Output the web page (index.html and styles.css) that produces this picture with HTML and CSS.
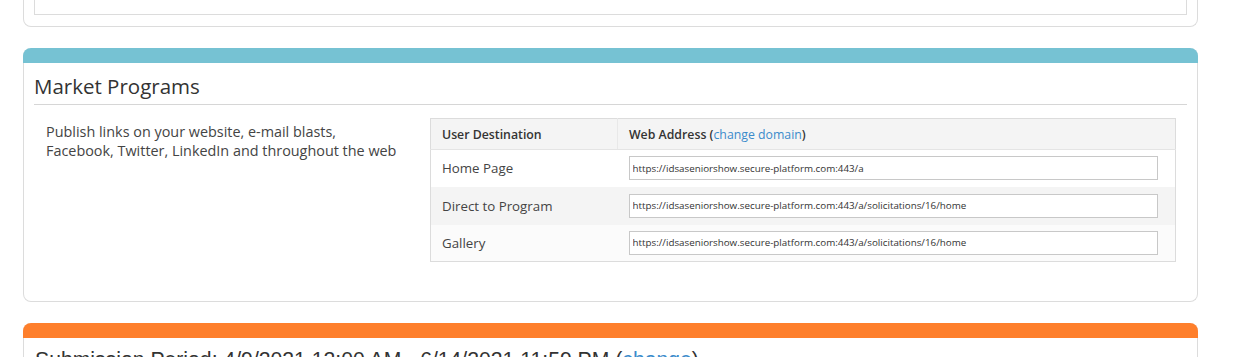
FILE: index.html
```html
<!DOCTYPE html>
<html lang="en">
<head>
  <meta charset="UTF-8" />
  <meta name="viewport" content="width=device-width, initial-scale=1.0"/>
  <title>Program Settings</title>
  <link rel="stylesheet" href="styles.css">
</head>
<body>

  <!-- Previous section (scrolled off the top) -->
  <div class="panel panel-cut">
    <div class="panel-inner-box"></div>
  </div>

  <!-- Market Programs -->
  <div class="panel">
    <div class="panel-bar bar-teal"></div>
    <h2 class="panel-title">Market Programs</h2>
    <div class="panel-body">
      <p class="market-desc">Publish links on your website, e-mail blasts, Facebook, Twitter, LinkedIn and throughout the web</p>

      <table class="link-table">
        <thead>
          <tr>
            <th class="col-dest">User Destination</th>
            <th>Web Address (<a href="#">change domain</a>)</th>
          </tr>
        </thead>
        <tbody>
          <tr>
            <td>Home Page</td>
            <td><input type="text" value="https://idsaseniorshow.secure-platform.com:443/a" readonly></td>
          </tr>
          <tr class="stripe">
            <td>Direct to Program</td>
            <td><input type="text" value="https://idsaseniorshow.secure-platform.com:443/a/solicitations/16/home" readonly></td>
          </tr>
          <tr>
            <td>Gallery</td>
            <td><input type="text" value="https://idsaseniorshow.secure-platform.com:443/a/solicitations/16/home" readonly></td>
          </tr>
        </tbody>
      </table>
    </div>
  </div>

  <!-- Submission Period -->
  <div class="panel">
    <div class="panel-bar bar-orange"></div>
    <div class="period">Submission Period: 4/9/2021 12:00 AM - 6/14/2021 11:59 PM (<a href="#">change</a>)</div>
  </div>

</body>
</html>
```

FILE: styles.css
```css
/* Basic Reset & Font */
* {
  box-sizing: border-box;
  margin: 0;
  padding: 0;
}

body {
  font-family: 'Open Sans', sans-serif;
  background: #fff;
  color: #444;
  padding: 0 42px 0 23px;
  display: flex;
  flex-direction: column;
  gap: 21px;
}

a {
  color: #3b8bcb;
  text-decoration: none;
}

/* Panels */
.panel {
  border: 1px solid #dcdcdc;
  border-top: none;
  border-radius: 8px;
  background: #fff;
}

.panel-cut {
  height: 27px;
  border-radius: 0 0 8px 8px;
  padding: 0 10px;
}

.panel-inner-box {
  height: 15px;
  border: 1px solid #dcdcdc;
  border-top: none;
}

.panel-bar {
  height: 15px;
  margin: 0 -1px;
  border-radius: 8px 8px 0 0;
}

.bar-teal {
  background: #76c2d3;
}

.bar-orange {
  background: #fe7f2c;
}

.panel-title {
  margin: 9px 10px 0;
  padding-bottom: 4px;
  border-bottom: 1px solid #d6d6d6;
  font-size: 20.5px;
  font-weight: normal;
  line-height: 28px;
  color: #333;
}

/* Market Programs body */
.panel-body {
  display: flex;
  align-items: flex-start;
  padding: 13px 21px 39px 22px;
}

.market-desc {
  width: 384px;
  padding-top: 4px;
  padding-right: 30px;
  font-size: 14.4px;
  line-height: 19px;
  color: #444;
}

.link-table {
  width: 746px;
  border-collapse: collapse;
  border: 1px solid #dcdcdc;
  font-size: 13.3px;
}

.link-table th {
  height: 31px;
  padding: 0 11px;
  background: #f4f4f4;
  text-align: left;
  font-size: 12.3px;
  font-weight: 600;
  color: #333;
  border-bottom: 1px solid #e4e4e4;
}

.link-table th a {
  font-weight: normal;
}

.link-table th.col-dest {
  width: 187px;
  border-right: 1px solid #e8e8e8;
}

.link-table td {
  height: 37px;
  padding: 0 11px;
  color: #444;
}

.link-table tr.stripe td {
  height: 38px;
  background: #f4f4f4;
}

.link-table tbody tr:last-child td {
  background: #fbfbfb;
}

.link-table input {
  display: block;
  width: 529px;
  height: 24px;
  padding: 0 3px;
  border: 1px solid #c8c8c8;
  background: #fff;
  font-family: inherit;
  font-size: 9.8px;
  color: #333;
}

/* Submission Period */
.period {
  padding: 10px 11px 20px;
  font-family: 'Liberation Sans', Arial, sans-serif;
  font-size: 21.2px;
  line-height: 24px;
  color: #333;
}
```
